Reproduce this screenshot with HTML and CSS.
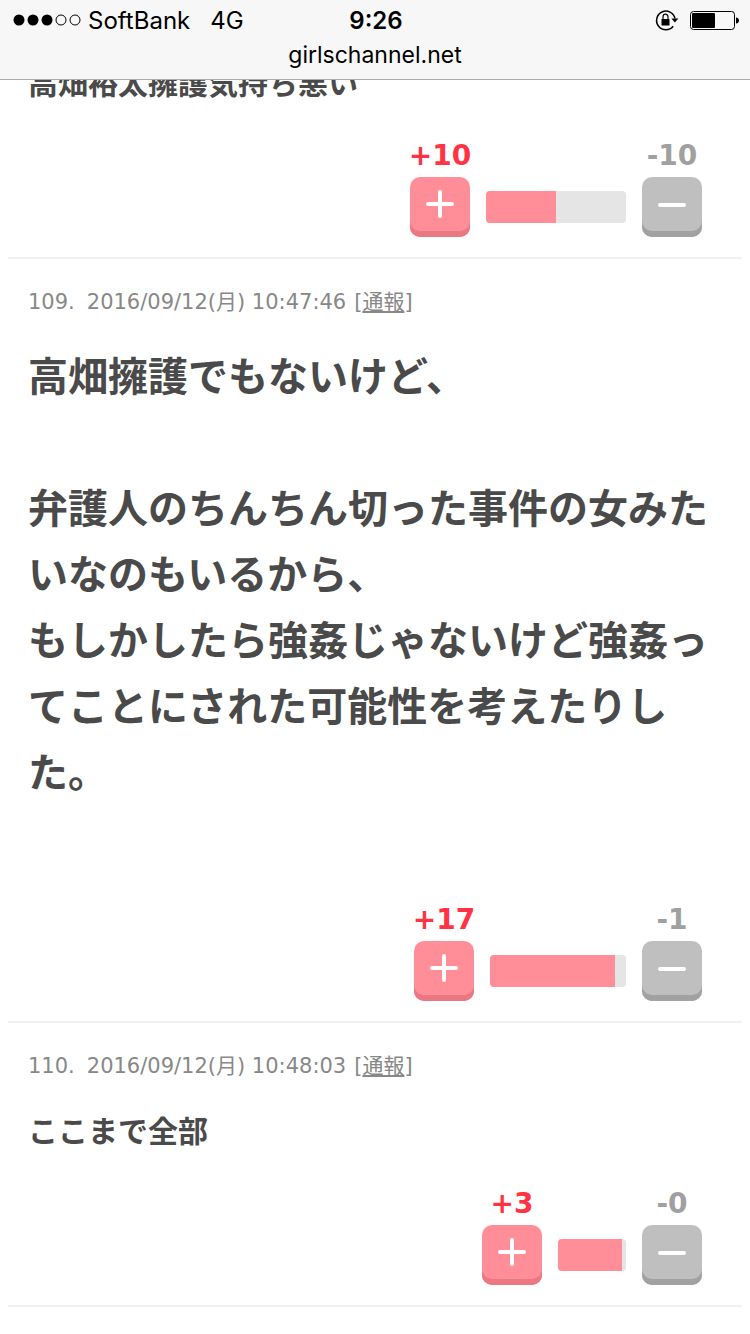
FILE: index.html
```html
<!DOCTYPE html>
<html lang="ja">
<head>
    <meta charset="UTF-8">
    <meta name="viewport" content="width=device-width, initial-scale=1.0">
    <title>girlschannel.net</title>
    <link rel="stylesheet" href="styles.css">
</head>
<body>
    <header class="browser-bar">
        <div class="status">
            <div class="status-left">
                <svg class="signal" width="68" height="12" viewBox="0 0 68 12">
                    <circle cx="6" cy="6" r="5.5"/>
                    <circle cx="20" cy="6" r="5.5"/>
                    <circle cx="34" cy="6" r="5.5"/>
                    <circle cx="48" cy="6" r="5" fill="none" stroke="#000"/>
                    <circle cx="62" cy="6" r="5" fill="none" stroke="#000"/>
                </svg>
                <span>SoftBank</span>
                <span class="network">4G</span>
            </div>
            <div class="clock">9:26</div>
            <div class="status-right">
                <svg width="24" height="22" viewBox="0 0 24 22">
                    <path d="M18.2 17.2A9.3 9.3 0 1 1 20 9.5" fill="none" stroke="#000" stroke-width="1.5"/>
                    <path d="M16.4 9.6h7l-3.5 4z"/>
                    <rect x="6.5" y="10" width="8" height="6.5" rx="0.6"/>
                    <path d="M8 10.5V8a2.5 2.8 0 0 1 5 0v2.5" fill="none" stroke="#000" stroke-width="1.2"/>
                </svg>
                <svg width="49" height="19" viewBox="0 0 49 19">
                    <rect x="0.5" y="0.5" width="44" height="18" rx="3" fill="none" stroke="#000"/>
                    <rect x="2" y="2" width="23" height="15" rx="1"/>
                    <path d="M46 6.5c4 0 4 6 0 6z"/>
                </svg>
            </div>
        </div>
        <div class="address">girlschannel.net</div>
    </header>

    <main class="comments">
        <article class="comment">
            <p class="body">高畑裕太擁護気持ち悪い</p>
            <div class="votes">
                <div class="vote plus">
                    <span class="count">+10</span>
                    <button type="button" aria-label="プラス">
                        <svg width="28" height="28" viewBox="0 0 28 28"><path d="M2 14h24M14 2v24"/></svg>
                    </button>
                </div>
                <div class="bar" style="width: 140px"><div class="bar-fill" style="width: 50%"></div></div>
                <div class="vote minus">
                    <span class="count">-10</span>
                    <button type="button" aria-label="マイナス">
                        <svg width="28" height="28" viewBox="0 0 28 28"><path d="M2 15h24"/></svg>
                    </button>
                </div>
            </div>
        </article>

        <article class="comment">
            <div class="meta">
                <span class="number">109.</span>
                <time>2016/09/12(月) 10:47:46</time>
                <span>[<a href="#">通報</a>]</span>
            </div>
            <p class="body large">高畑擁護でもないけど、<br><br>弁護人のちんちん切った事件の女みたいなのもいるから、<br>もしかしたら強姦じゃないけど強姦ってことにされた可能性を考えたりした。<br><br></p>
            <div class="votes">
                <div class="vote plus">
                    <span class="count">+17</span>
                    <button type="button" aria-label="プラス">
                        <svg width="28" height="28" viewBox="0 0 28 28"><path d="M2 14h24M14 2v24"/></svg>
                    </button>
                </div>
                <div class="bar" style="width: 136px"><div class="bar-fill" style="width: 92%"></div></div>
                <div class="vote minus">
                    <span class="count">-1</span>
                    <button type="button" aria-label="マイナス">
                        <svg width="28" height="28" viewBox="0 0 28 28"><path d="M2 15h24"/></svg>
                    </button>
                </div>
            </div>
        </article>

        <article class="comment">
            <div class="meta">
                <span class="number">110.</span>
                <time>2016/09/12(月) 10:48:03</time>
                <span>[<a href="#">通報</a>]</span>
            </div>
            <p class="body">ここまで全部</p>
            <div class="votes">
                <div class="vote plus">
                    <span class="count">+3</span>
                    <button type="button" aria-label="プラス">
                        <svg width="28" height="28" viewBox="0 0 28 28"><path d="M2 14h24M14 2v24"/></svg>
                    </button>
                </div>
                <div class="bar" style="width: 68px"><div class="bar-fill" style="width: 94%"></div></div>
                <div class="vote minus">
                    <span class="count">-0</span>
                    <button type="button" aria-label="マイナス">
                        <svg width="28" height="28" viewBox="0 0 28 28"><path d="M2 15h24"/></svg>
                    </button>
                </div>
            </div>
        </article>
    </main>
</body>
</html>
```
FILE: styles.css
```css
* {
    box-sizing: border-box;
}

body {
    margin: 0;
    background-color: #fff;
    color: #4a4a4a;
    font-family: "DejaVu Sans", "Noto Sans CJK JP", sans-serif;
}

/* Status bar and address, stays over the comments */
.browser-bar {
    position: fixed;
    top: 0;
    left: 0;
    right: 0;
    height: 80px;
    background-color: #f7f7f7;
    border-bottom: 1px solid #adadad;
    color: #000;
    font-family: Inter, "Noto Sans CJK JP", sans-serif;
    font-size: 24px;
}

.status {
    display: grid;
    grid-template-columns: 1fr auto 1fr;
    align-items: center;
    height: 40px;
    padding: 0 11px 0 13px;
}

.status-left,
.status-right {
    display: flex;
    align-items: center;
}

.signal {
    margin-right: 7px;
}

.network {
    margin-left: 20px;
}

.clock {
    font-weight: 600;
}

.status-right {
    justify-content: flex-end;
    gap: 11px;
}

.address {
    font-size: 23px;
    line-height: 30px;
    text-align: center;
}

.comments {
    padding: 57px 8px 0;
}

.comment {
    padding: 28px 40px 20px 20px;
    border-bottom: 2px solid #f1f1f1;
}

.comment:first-child {
    padding-top: 0;
}

.meta {
    display: flex;
    gap: 8px;
    margin-bottom: 24px;
    color: #888;
    font-size: 21px;
    line-height: 30px;
}

.number {
    margin-right: 4px;
}

.meta a {
    color: #888;
}

.body {
    margin: 0 -20px 33px 0;
    font-family: "Noto Sans CJK JP", sans-serif;
    font-size: 30px;
    font-weight: bold;
    line-height: 48px;
}

.body.large {
    font-size: 40px;
    line-height: 66px;
}

.votes {
    display: flex;
    justify-content: flex-end;
    align-items: flex-end;
    gap: 16px;
}

.vote {
    display: flex;
    flex-direction: column;
    align-items: center;
    gap: 3px;
    width: 60px;
}

.count {
    font-size: 28px;
    font-weight: bold;
    line-height: 36px;
    white-space: nowrap;
}

.plus .count {
    color: #ff3344;
}

.minus .count {
    color: #a0a0a0;
}

.vote button {
    display: flex;
    align-items: center;
    justify-content: center;
    width: 60px;
    height: 60px;
    padding: 0 0 6px;
    border: none;
    border-radius: 10px;
    cursor: pointer;
}

.plus button {
    background-color: #ff8e99;
    box-shadow: inset 0 -6px 0 #eb7782;
}

.minus button {
    background-color: #bfbfbf;
    box-shadow: inset 0 -6px 0 #a1a1a1;
}

.vote path {
    fill: none;
    stroke: #fff;
    stroke-width: 4;
    stroke-linecap: round;
}

.bar {
    height: 32px;
    margin-bottom: 14px;
    border-radius: 4px;
    background-color: #e5e5e5;
    overflow: hidden;
}

.bar-fill {
    height: 100%;
    background-color: #ff8e99;
}
```
